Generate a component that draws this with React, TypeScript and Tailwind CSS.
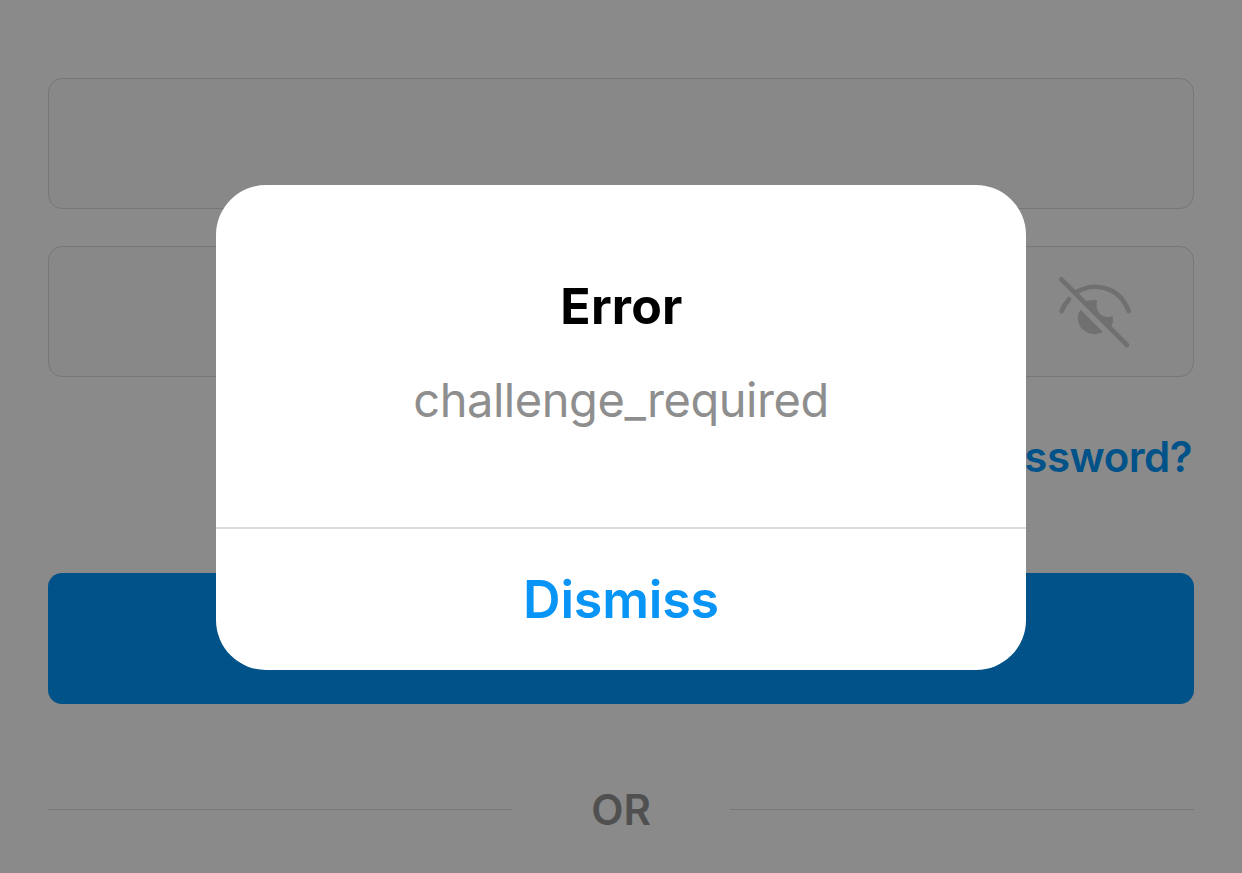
import * as React from "react";

function HiddenEyeIcon() {
  return (
    <svg viewBox="0 0 330 300" className="mb-[3px] h-[100px] w-[110px]" fill="none" aria-hidden="true">
      <g stroke="#707070" strokeWidth={14} strokeLinecap="round">
        <path d="M64 58 L261 255" />
        <path d="M65 153 Q73 133 87 118" />
        <path d="M108 97 C162 66 236 76 266 153" />
      </g>
      {/* Iris, split by the slash */}
      <path d="M122 149 L188 215 C172 226 146 225 130 210 C112 194 108 168 122 149 Z" fill="#707070" />
      <path
        d="M135 126 C146 120 160 119 172 121 C167 136 170 153 181 163 C191 172 206 173 218 168 C221 182 218 194 211 204 Z"
        fill="#707070"
      />
    </svg>
  );
}

function LoginForm() {
  return (
    <div className="flex flex-col px-12 pt-[78px]">
      <div className="h-[131px] rounded-[14px] border border-[#777777] bg-[#888888]" />
      <div className="mt-[37px] flex h-[131px] items-center justify-end rounded-[14px] border border-[#777777] bg-[#888888] pr-[43px]">
        <HiddenEyeIcon />
      </div>
      <a className="mt-[55px] self-end pr-[2px] text-[42px] leading-[50px] font-semibold tracking-[-0.5px] text-[#005288]">
        Forgot password?
      </a>
      <div className="mt-[91px] h-[131px] rounded-[14px] bg-[#005288]" />
      <div className="mt-[80px] flex h-[50px] items-center justify-between">
        <div className="h-px w-[464px] bg-[#777777]" />
        <span className="pt-px text-[42px] leading-[50px] font-semibold text-[#505050]">OR</span>
        <div className="h-px w-[464px] bg-[#777777]" />
      </div>
    </div>
  );
}

function ErrorDialog() {
  return (
    <div
      role="alertdialog"
      className="flex h-[485px] w-[810px] flex-col overflow-hidden rounded-[50px] bg-white text-center"
    >
      <div className="flex flex-1 flex-col items-center border-b-2 border-[#dbdbdb] pt-[91px]">
        <h2 className="pl-px text-[50px] leading-[60px] font-bold tracking-[0.2px] text-black">Error</h2>
        <p className="mt-[35px] text-[47px] leading-[58px] tracking-[-0.45px] text-[#8e8e8e]">
          challenge_required
        </p>
      </div>
      <button className="h-[141px] text-[52px] font-semibold tracking-[-0.2px] text-[#0995f6]">
        Dismiss
      </button>
    </div>
  );
}

export default function App() {
  return (
    <main className="relative h-[873px] w-[1242px] overflow-hidden bg-[#8a8a8a] font-[Inter,sans-serif]">
      <LoginForm />
      <div className="absolute inset-0 flex items-start justify-center pt-[185px]">
        <ErrorDialog />
      </div>
    </main>
  );
}
